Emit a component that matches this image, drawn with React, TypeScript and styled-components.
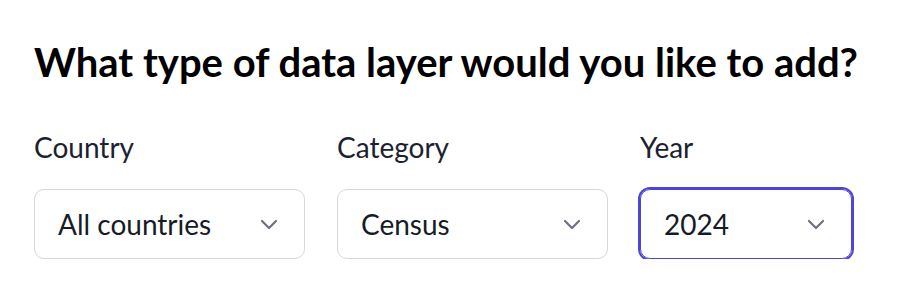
import React, {useState} from 'react'
import styled, {createGlobalStyle} from 'styled-components'

const GlobalStyle = createGlobalStyle`
  body {
    margin: 0;
    background: #fff;
    font-family: Lato, "Noto Sans", sans-serif;
    color: #111827;
  }
`

type Field = {
    label: string
    value: string
    width: number
}

const fields: Field[] = [
    {label: 'Country', value: 'All countries', width: 271},
    {label: 'Category', value: 'Census', width: 271},
    {label: 'Year', value: '2024', width: 212},
]

const Chevron = () => (
    <svg width="18" height="11" viewBox="0 0 18 11" fill="none" stroke="currentColor"
         strokeWidth="2.2" strokeLinecap="round" strokeLinejoin="round">
        <path d="M2 2l7 7 7-7"/>
    </svg>
)

function App() {
    const [focused, setFocused] = useState<number>(2)

    return (
        <Page>
            <GlobalStyle/>
            <Title>What type of data layer would you like to add?</Title>
            <Row>
                {fields.map((f, i) => (
                    <Group key={f.label}>
                        <Label>{f.label}</Label>
                        <Select $width={f.width} $focused={focused === i} onClick={() => setFocused(i)}>
                            <span>{f.value}</span>
                            <Icon><Chevron/></Icon>
                        </Select>
                    </Group>
                ))}
            </Row>
        </Page>
    )
}

const Page = styled.div`
  padding: 38px 34px 0;
`

const Title = styled.h1`
  margin: 0;
  font-size: 40px;
  font-weight: 700;
  line-height: 48px;
  color: #000;
`

const Row = styled.div`
  display: flex;
  gap: 32px;
  margin-top: 44px;
`

const Group = styled.div`
  display: flex;
  flex-direction: column;
  gap: 25px;
`

const Label = styled.label`
  font-size: 28px;
  line-height: 34px;
  color: #1c2130;
`

const Select = styled.div<{ $width: number, $focused: boolean }>`
  box-sizing: border-box;
  width: ${p => p.$width}px;
  height: 70px;
  display: flex;
  align-items: center;
  justify-content: space-between;
  padding: 0 26px 0 23px;
  border: 1px solid ${p => p.$focused ? '#4d45d8' : '#d4d7dd'};
  box-shadow: ${p => p.$focused ? '0 0 0 2px #4d45d8' : 'none'};
  border-radius: 10px;
  font-size: 28px;
  color: #161b26;
  cursor: pointer;
`

const Icon = styled.span`
  display: flex;
  color: #6b7280;
`

export default App
